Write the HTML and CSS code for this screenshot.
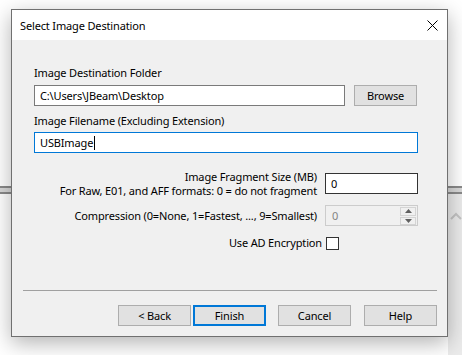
FILE: index.html
```html
<!DOCTYPE html>
<html lang="en">
<head>
  <meta charset="UTF-8">
  <title>Select Image Destination</title>
  <link rel="stylesheet" href="styles.css">
</head>
<body>
  <!-- window behind the dialog -->
  <div class="backdrop">
    <div class="bg-rule"></div>
    <div class="bg-side">
      <svg class="bg-chevron" width="12" height="8" viewBox="0 0 12 8"><path d="M1 7 L6 2 L11 7" fill="none" stroke="#c4c4c4" stroke-width="2"/></svg>
    </div>
  </div>

  <div class="dialog">
    <div class="titlebar">
      <span class="title">Select Image Destination</span>
      <svg class="close" width="11" height="11" viewBox="0 0 11 11"><path d="M0.5 0.5 L10.5 10.5 M10.5 0.5 L0.5 10.5" stroke="#000" stroke-width="1"/></svg>
    </div>

    <div class="content">
      <div class="label first">Image Destination Folder</div>
      <div class="path-row">
        <div class="textbox path">C:\Users\JBeam\Desktop</div>
        <div class="btn browse">Browse</div>
      </div>

      <div class="label second">Image Filename (Excluding Extension)</div>
      <div class="textbox filename focused">USBImage<span class="caret"></span></div>

      <div class="opt-row fragment-row">
        <div class="opt-label two-line">Image Fragment Size (MB)<br>For Raw, E01, and AFF formats: 0 = do not fragment</div>
        <div class="textbox small dark">0</div>
      </div>

      <div class="opt-row compress-row">
        <div class="opt-label">Compression (0=None, 1=Fastest, ..., 9=Smallest)</div>
        <div class="spinner">
          <span class="spin-value">0</span>
          <div class="spin-btns">
            <div class="spin-btn"><svg width="7" height="4" viewBox="0 0 7 4"><path d="M0 4 L3.5 0 L7 4 Z" fill="#606060"/></svg></div>
            <div class="spin-btn"><svg width="7" height="4" viewBox="0 0 7 4"><path d="M0 0 L3.5 4 L7 0 Z" fill="#606060"/></svg></div>
          </div>
        </div>
      </div>

      <div class="opt-row check-row">
        <div class="opt-label check-label">Use AD Encryption</div>
        <div class="checkbox"></div>
      </div>

      <div class="footer">
        <div class="separator"></div>
        <div class="buttons">
          <div class="btn back">&lt; Back</div>
          <div class="btn finish">Finish</div>
          <div class="btn cancel">Cancel</div>
          <div class="btn help">Help</div>
        </div>
      </div>
    </div>
  </div>
</body>
</html>
```

FILE: styles.css
```css
* {
  box-sizing: border-box;
}

body {
  margin: 0;
  padding: 9px 0 0 11px;
  width: 462px;
  height: 355px;
  overflow: hidden;
  position: relative;
  background: #ffffff;
  font-family: "Noto Sans", "Open Sans", sans-serif;
  font-size: 11px;
  letter-spacing: -0.15px;
  color: #000;
}

/* background window */
.backdrop {
  position: absolute;
  top: 0;
  left: 0;
  width: 462px;
  height: 355px;
  z-index: 0;
}

.bg-rule {
  position: absolute;
  top: 186px;
  left: 0;
  width: 462px;
  height: 8px;
  background: #d8d8d8;
  border-top: 2px solid #8a8a8a;
  border-bottom: 2px solid #8a8a8a;
}

.bg-side {
  position: absolute;
  top: 194px;
  left: 448px;
  width: 14px;
  height: 161px;
  background: #ebebeb;
}

.bg-chevron {
  position: absolute;
  top: 18px;
  left: 2px;
}

/* dialog */
.dialog {
  position: relative;
  z-index: 1;
  width: 437px;
  height: 328px;
  border: 1px solid #707070;
  background: #f0f0f0;
  box-shadow: 0 6px 20px rgba(0, 0, 0, 0.3);
  display: flex;
  flex-direction: column;
}

.titlebar {
  height: 30px;
  background: #ffffff;
  display: flex;
  align-items: center;
  justify-content: space-between;
  padding: 0 9px 0 8px;
}

.content {
  flex: 1;
  display: flex;
  flex-direction: column;
  padding: 0 10px 10px 22px;
}

.label {
  line-height: 16px;
}

.label.first {
  margin-top: 25px;
}

.label.second {
  margin-top: 7px;
}

.path-row {
  display: flex;
  gap: 9px;
  margin-top: 4px;
}

.textbox {
  height: 21px;
  background: #ffffff;
  border: 1px solid #7a7a7a;
  line-height: 19px;
  padding-left: 5px;
  white-space: nowrap;
}

.textbox.path {
  width: 311px;
}

.textbox.filename {
  width: 384px;
  margin-top: 3px;
}

.textbox.focused {
  border-color: #0078d7;
}

.caret {
  display: inline-block;
  width: 1px;
  height: 14px;
  margin-left: 1px;
  background: #000;
  vertical-align: -3px;
}

.textbox.small {
  width: 93px;
  margin-top: 3px;
}

.textbox.dark {
  border-color: #333333;
}

.btn {
  height: 21px;
  width: 73px;
  background: #e1e1e1;
  border: 1px solid #adadad;
  text-align: center;
  line-height: 19px;
}

.btn.browse {
  width: 63px;
}

.opt-row {
  display: flex;
  align-items: center;
}

.opt-label {
  width: 283px;
  margin-right: 8px;
  text-align: right;
  line-height: 16px;
  white-space: nowrap;
}

.fragment-row {
  align-items: flex-start;
  margin-top: 17px;
}

.opt-label.two-line {
  line-height: 14px;
}

.compress-row {
  margin-top: 7px;
}

.spinner {
  width: 93px;
  height: 21px;
  border: 1px solid #cccccc;
  background: #f0f0f0;
  display: flex;
  justify-content: space-between;
  padding: 0 1px 0 6px;
}

.spin-value {
  color: #838383;
  line-height: 19px;
}

.spin-btns {
  display: flex;
  flex-direction: column;
  gap: 1px;
  padding-top: 1px;
}

.spin-btn {
  width: 16px;
  height: 9px;
  border: 1px solid #d4d4d4;
  display: flex;
  align-items: center;
  justify-content: center;
}

.check-row {
  margin-top: 9px;
}

.opt-label.check-label {
  width: 288px;
  margin-right: 4px;
}

.checkbox {
  width: 13px;
  height: 13px;
  background: #ffffff;
  border: 1px solid #333333;
}

.footer {
  margin-top: auto;
}

.separator {
  height: 1px;
  background: #a0a0a0;
  margin-left: -11px;
}

.buttons {
  display: flex;
  justify-content: flex-end;
  margin-top: 14px;
}

.btn.back {
  margin-right: 2px;
}

.btn.finish {
  border: 2px solid #0078d7;
  line-height: 17px;
  margin-right: 12px;
}

.btn.cancel {
  margin-right: 13px;
}
```
